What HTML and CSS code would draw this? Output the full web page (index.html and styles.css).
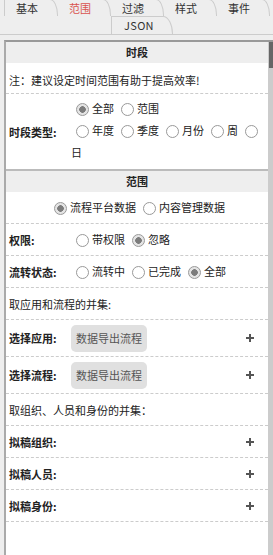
FILE: index.html
```html
<!DOCTYPE html>
<html lang="zh-CN">
<head>
    <meta charset="UTF-8">
    <meta name="viewport" content="width=device-width, initial-scale=1.0">
    <title>范围设置</title>
    <link rel="stylesheet" href="styles.css">
</head>
<body>
    <div class="tabs">
        <div class="tab-row">
            <span class="tab">基本</span>
            <span class="tab active">范围</span>
            <span class="tab">过滤</span>
            <span class="tab">样式</span>
            <span class="tab">事件</span>
        </div>
        <div class="tab-row second">
            <span class="tab json">JSON</span>
        </div>
    </div>

    <div class="panel">
        <div class="panel-body">
            <div class="section-title">时段</div>
            <div class="row note">注：建议设定时间范围有助于提高效率!</div>
            <div class="row field period">
                <span class="field-label">时段类型:</span>
                <div class="options">
                    <label><input type="radio" name="range" checked>全部</label><label><input type="radio" name="range">范围</label><br>
                    <label><input type="radio" name="unit">年度</label><label><input type="radio" name="unit">季度</label><label><input type="radio" name="unit">月份</label><label><input type="radio" name="unit">周</label><label><input type="radio" name="unit"><wbr>日</label>
                </div>
            </div>

            <div class="section-title boxed">范围</div>
            <div class="row center">
                <label><input type="radio" name="source" checked>流程平台数据</label><label><input type="radio" name="source">内容管理数据</label>
            </div>
            <div class="row field">
                <span class="field-label">权限:</span>
                <div class="options">
                    <label><input type="radio" name="auth">带权限</label><label><input type="radio" name="auth" checked>忽略</label>
                </div>
            </div>
            <div class="row field">
                <span class="field-label">流转状态:</span>
                <div class="options">
                    <label><input type="radio" name="state">流转中</label><label><input type="radio" name="state">已完成</label><label><input type="radio" name="state" checked>全部</label>
                </div>
            </div>
            <div class="row">取应用和流程的并集:</div>
            <div class="row field tall">
                <span class="field-label">选择应用:</span>
                <span class="chip">数据导出流程</span>
                <span class="add"><svg width="8" height="8" viewBox="0 0 8 8"><rect x="3" y="0" width="2" height="8"/><rect x="0" y="3" width="8" height="2"/></svg></span>
            </div>
            <div class="row field tall">
                <span class="field-label">选择流程:</span>
                <span class="chip">数据导出流程</span>
                <span class="add"><svg width="8" height="8" viewBox="0 0 8 8"><rect x="3" y="0" width="2" height="8"/><rect x="0" y="3" width="8" height="2"/></svg></span>
            </div>
            <div class="row">取组织、人员和身份的并集：</div>
            <div class="row field">
                <span class="field-label">拟稿组织:</span>
                <span class="add"><svg width="8" height="8" viewBox="0 0 8 8"><rect x="3" y="0" width="2" height="8"/><rect x="0" y="3" width="8" height="2"/></svg></span>
            </div>
            <div class="row field">
                <span class="field-label">拟稿人员:</span>
                <span class="add"><svg width="8" height="8" viewBox="0 0 8 8"><rect x="3" y="0" width="2" height="8"/><rect x="0" y="3" width="8" height="2"/></svg></span>
            </div>
            <div class="row field">
                <span class="field-label">拟稿身份:</span>
                <span class="add"><svg width="8" height="8" viewBox="0 0 8 8"><rect x="3" y="0" width="2" height="8"/><rect x="0" y="3" width="8" height="2"/></svg></span>
            </div>
        </div>
        <div class="scrollbar"><div class="thumb"></div></div>
    </div>
</body>
</html>
```

FILE: styles.css
```css
html, body {
    height: 100%;
}

body {
    font-family: "Noto Sans CJK SC", "Noto Sans", sans-serif;
    font-size: 11px;
    color: #222;
    margin: 0;
    background-color: #eee;
    display: flex;
    flex-direction: column;
    overflow: hidden;
}

.tabs {
    height: 34px;
    border-bottom: 1px solid #ccc;
    overflow: hidden;
}

.tab-row {
    display: flex;
    padding-left: 4px;
    margin-top: -1px;
}

.tab-row.second {
    justify-content: center;
    margin-top: 0;
    padding-left: 11px;
}

.tab {
    flex-shrink: 0;
    height: 16px;
    line-height: 16px;
    padding: 0 19px 0 11px;
    border: 1px solid #ccc;
    border-bottom: none;
    border-top-right-radius: 8px 16px;
    color: #333;
}

.tab + .tab {
    border-left: none;
}

.tab.active {
    color: #d9534f;
}

.tab.json {
    height: 17px;
    line-height: 17px;
    padding: 0 18px 0 12px;
    border-top-right-radius: 10px 18px;
    letter-spacing: 0.3px;
}

.panel {
    flex: 1;
    min-height: 0;
    display: flex;
    margin: 5px 0 0 4px;
    border-top: 2px solid #999;
    border-left: 2px solid #aaa;
    background-color: #fff;
}

.panel-body {
    flex: 1;
}

.scrollbar {
    width: 5px;
    background-color: #ccc;
}

.thumb {
    height: 26px;
    margin-left: 1px;
    background-color: #666;
}

.section-title {
    height: 21px;
    line-height: 21px;
    text-align: center;
    font-weight: 700;
    background-color: #eee;
}

.section-title.boxed {
    border-top: 2px solid #bbb;
}

.row {
    display: flex;
    align-items: center;
    min-height: 31px;
    padding: 0 3px;
    border-bottom: 1px dashed #ccc;
}

.row.note {
    display: block;
    min-height: 0;
    line-height: 16px;
    padding: 9px 3px 5px;
}

.row.period {
    border-bottom: none;
}

.row.center {
    justify-content: center;
}

.row.tall {
    min-height: 36px;
}

.field-label {
    flex-shrink: 0;
    width: 62px;
    font-weight: 700;
}

.options {
    flex: 1;
}

.options label + label,
.center label + label {
    margin-left: 2px;
}

.period .options {
    line-height: 22px;
    padding-top: 3px;
    padding-bottom: 6px;
}

input[type="radio"] {
    -webkit-appearance: none;
    appearance: none;
    width: 13px;
    height: 13px;
    margin: 0 3px 0 5px;
    border: 1px solid #999;
    border-radius: 50%;
    background-color: #fff;
    vertical-align: middle;
    position: relative;
    top: -1px;
}

input[type="radio"]:checked {
    background: radial-gradient(circle, #7c7c7c 0 3px, #e4e4e4 3.6px);
}

.chip {
    height: 27px;
    line-height: 27px;
    padding: 0 5px;
    border-radius: 5px;
    background-color: #e0e0e0;
    color: #555;
}

.add {
    margin-left: auto;
    margin-right: 11px;
    display: flex;
    fill: #555;
}
```
